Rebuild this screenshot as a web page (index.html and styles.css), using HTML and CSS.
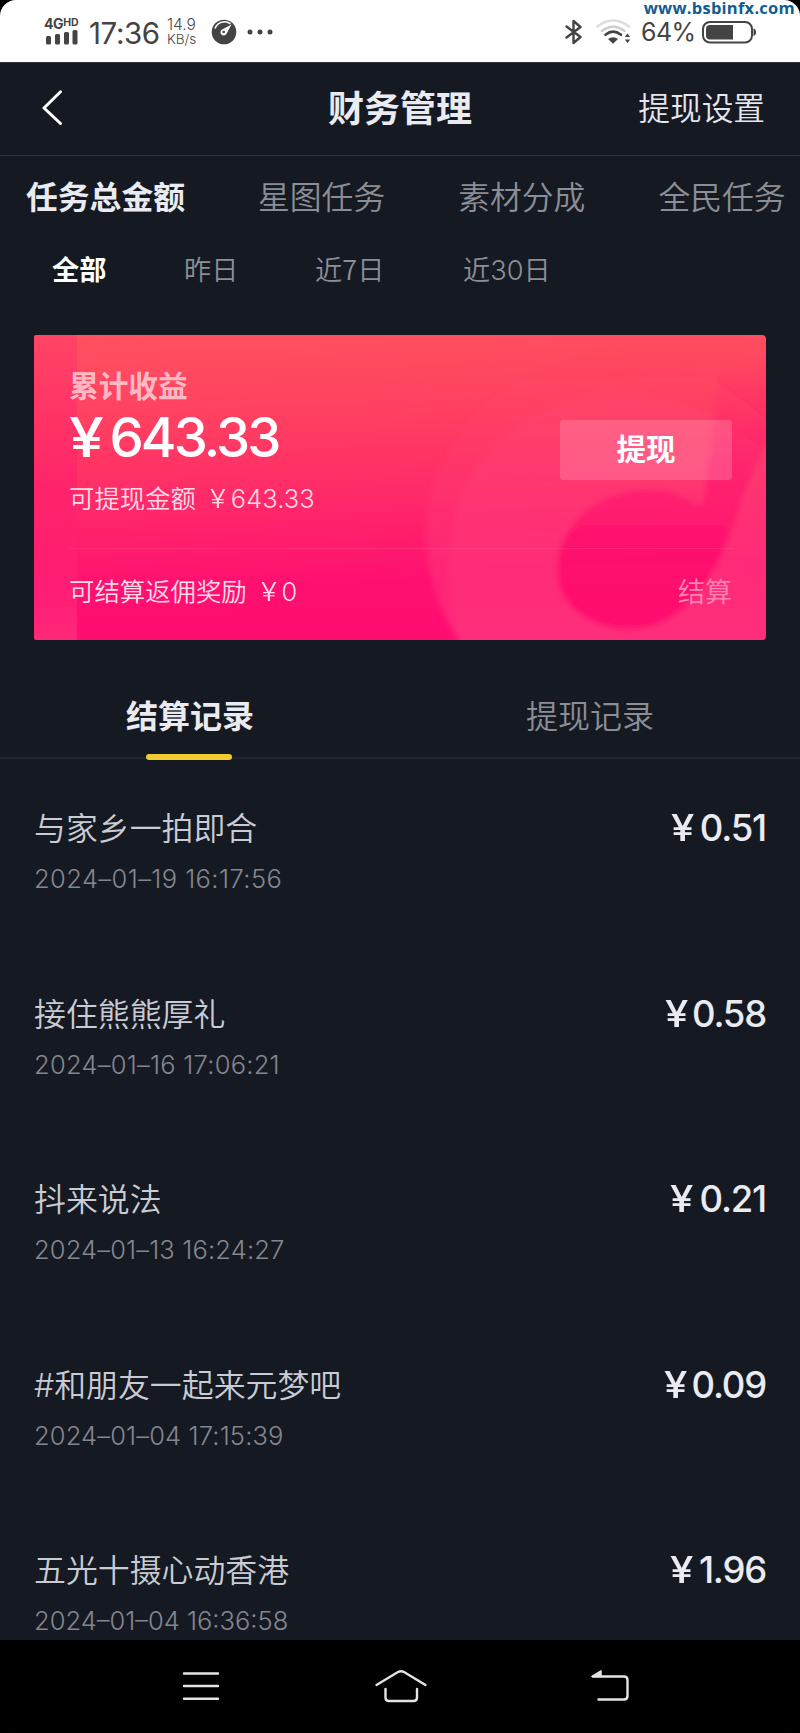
FILE: index.html
```html
<!DOCTYPE html>
<html lang="zh-CN">
<head>
<meta charset="utf-8">
<title>财务管理</title>
<link rel="stylesheet" href="styles.css">
</head>
<body>
<div class="phone">
  <div class="watermark">www.bsbinfx.com</div>
  <div class="status">
    <div class="signal">
      <div class="net">4G<span class="hd">HD</span></div>
      <svg width="32" height="15" viewBox="0 0 32 15" fill="#444"><rect x="0" y="6" width="5" height="8.5" rx="1.5"/><rect x="9" y="4" width="5" height="10.5" rx="1.5"/><rect x="18" y="2" width="5" height="12.5" rx="1.5"/><rect x="26.500" y="0" width="5" height="14.500" rx="1.500"/></svg>
    </div>
    <div class="clock">17:36</div>
    <div class="speed"><span>14.9</span><span class="unit">KB/s</span></div>
    <svg class="gauge" width="26" height="26" viewBox="0 0 26 26"><circle cx="13" cy="13" r="12.300" fill="#444"/><path d="M4 9.500A10 10 0 0 1 19.500 4.800" fill="none" stroke="#fff" stroke-width="1.600"/><path d="M20.500 5.500L15.500 14.800A3.200 3.200 0 1 1 11.200 10.500Z" fill="#fff"/><circle cx="12.700" cy="13" r="1.300" fill="#444"/></svg>
    <svg class="dots" width="26" height="6" viewBox="0 0 26 6" fill="#444"><circle cx="3" cy="3" r="2.500"/><circle cx="13" cy="3" r="2.500"/><circle cx="23" cy="3" r="2.500"/></svg>
    <svg class="bt" width="18" height="26" viewBox="0 0 18 26" fill="none" stroke="#444" stroke-width="2.400" stroke-linejoin="round" stroke-linecap="round"><path d="M1.500 7.500L15.500 18L8.500 24V2L15.500 8L1.500 18.500"/></svg>
    <svg class="wifi" width="35" height="26" viewBox="0 0 35 26" fill="none" stroke-linecap="round"><path d="M1.500 7.500Q17 -4.500 33 7.500" stroke="#ddd" stroke-width="2.600"/><path d="M6 12Q17 3.500 28.500 12" stroke="#ccc" stroke-width="2.600"/><path d="M9.500 15.800Q17 9.500 25 15.800" stroke="#444" stroke-width="2.600"/><path d="M12 20Q17 16.500 22 20L17 24.800Z" fill="#444"/><path d="M28.800 18L31.500 14.500L34.200 18ZM28.800 20.500L31.500 24L34.200 20.500Z" fill="#444"/></svg>
    <div class="pct">64%</div>
    <svg class="battery" width="54" height="23" viewBox="0 0 54 23"><rect x="1" y="1" width="49" height="20.500" rx="7" fill="none" stroke="#444" stroke-width="2"/><path d="M8 4H31V18.500H8Q4 18.500 4 14.500V8Q4 4 8 4Z" fill="#444"/><path d="M51.500 7.500Q54 8 54 11.200T51.500 15Z" fill="#444"/></svg>
  </div>
  <div class="header">
    <svg class="back" width="22" height="36" viewBox="0 0 22 36" fill="none" stroke="#fff" stroke-width="3" stroke-linecap="round" stroke-linejoin="round"><path d="M18.500 1.800L2 18L18.500 33.500"/></svg>
    <div class="title">财务管理</div>
    <div class="setting">提现设置</div>
  </div>
  <div class="tabs"><div class="active">任务总金额</div><div>星图任务</div><div>素材分成</div><div>全民任务</div></div>
  <div class="ranges"><div class="range-all">全部</div><div class="range-day">昨日</div><div class="range-week">近<span class="seven">7</span>日</div><div>近30日</div></div>
  <div class="card">
    <svg class="art" width="732" height="306" viewBox="0 0 732 306">
      <defs>
        <linearGradient id="ring" x1="0" y1="0" x2="0" y2="1"><stop offset="0" stop-color="#ff4a75" stop-opacity="0"/><stop offset="1" stop-color="#ff4c88" stop-opacity=".45"/></linearGradient>
        <linearGradient id="edge" x1="0" y1="0" x2="0" y2="1"><stop offset="0" stop-color="#ff1675" stop-opacity=".22"/><stop offset=".5" stop-color="#ff0f70" stop-opacity=".35"/><stop offset=".7" stop-color="#ff2478" stop-opacity=".3"/><stop offset="1" stop-color="#ff5085" stop-opacity=".4"/></linearGradient>
        <linearGradient id="swirl" gradientUnits="userSpaceOnUse" x1="0" y1="20" x2="0" y2="220"><stop offset="0" stop-color="#ff1070" stop-opacity="0"/><stop offset=".55" stop-color="#ff0e6d" stop-opacity=".42"/><stop offset="1" stop-color="#ff086b" stop-opacity=".75"/></linearGradient>
        <filter id="soft" x="-20%" y="-20%" width="140%" height="140%"><feGaussianBlur stdDeviation="3"/></filter>
      </defs>
      <rect width="43" height="306" fill="url(#edge)"/>
      <g filter="url(#soft)">
        <path d="M428 310C380 240 380 155 430 93C492 12 605 0 682 45L740 90V310Z" fill="url(#ring)"/>
        <path d="M425 310C400 215 419 130 495 84C555 44 625 54 674 80L740 120V310Z" fill="#ff5b8b" opacity=".13"/>
        <path d="M685 35Q678 110 667 172C648 154 613 149 587 158C540 170 514 212 524 252C537 291 596 309 637 284C672 262 695 215 708 165L740 90V20Z" fill="url(#swirl)"/>
      </g>
    </svg>
    <div class="card-main">
      <div class="label">累计收益</div>
      <div class="total"><span class="yen">¥</span>643.33</div>
      <div class="line">可提现金额<span class="value"><span class="yen">¥</span>643.33</span></div>
    </div>
    <div class="withdraw">提现</div>
    <div class="card-foot"><div class="line">可结算返佣奖励<span class="value"><span class="yen">¥</span>0</span></div><div class="settle">结算</div></div>
  </div>
  <div class="record-tabs"><div class="active">结算记录</div><div>提现记录</div></div>
  <div class="records">
    <div class="record"><div><div class="name">与家乡一拍即合</div><div class="date loose">2024–01–19 16:17:56</div></div><div class="amount narrow"><span class="yen">¥</span>0.51</div></div>
    <div class="record"><div><div class="name">接住熊熊厚礼</div><div class="date mid">2024–01–16 17:06:21</div></div><div class="amount"><span class="yen">¥</span>0.58</div></div>
    <div class="record"><div><div class="name">抖来说法</div><div class="date slight">2024–01–13 16:24:27</div></div><div class="amount narrow"><span class="yen">¥</span>0.21</div></div>
    <div class="record"><div><div class="name">#和朋友一起来元梦吧</div><div class="date slight">2024–01–04 17:15:39</div></div><div class="amount"><span class="yen">¥</span>0.09</div></div>
    <div class="record"><div><div class="name">五光十摄心动香港</div><div class="date">2024–01–04 16:36:58</div></div><div class="amount narrow"><span class="yen">¥</span>1.96</div></div>
  </div>
  <div class="nav">
    <svg width="38" height="32" viewBox="0 0 38 32" stroke="#e6e3e3" stroke-width="2.400" stroke-linecap="round"><path d="M2 3.500H36M2 16H36M2 28.800H36"/></svg>
    <svg class="home" width="54" height="34" viewBox="0 0 54 34" fill="none" stroke="#e6e3e3" stroke-width="2.400" stroke-linecap="round" stroke-linejoin="round"><path d="M2.500 16L24 3Q27 1.500 30 3L51.500 16M11.500 20V28.500Q11.500 32 15 32H39.500Q43 32 43 28.500V20"/></svg>
    <svg width="40" height="34" viewBox="0 0 40 34" fill="none" stroke="#e6e3e3" stroke-width="2.400" stroke-linecap="round" stroke-linejoin="round"><path d="M3 7.500H34Q37.500 7.500 37.500 11V27Q37.500 30.500 34 30.500H8.500"/><path d="M2 7.500L11 2V7.500Z" fill="#e6e3e3" stroke-width="1.500"/></svg>
  </div>
</div>
</body>
</html>
```
FILE: styles.css
```css
* { box-sizing: border-box; }
body { margin: 0; background: #000; }
.phone {
  position: relative;
  width: 800px;
  height: 1733px;
  overflow: hidden;
  background: #151922;
  border-radius: 16px;
  display: flex;
  flex-direction: column;
  font-family: Inter, "Noto Sans CJK SC", sans-serif;
  font-weight: 350;
  color: #8c8e96;
  white-space: nowrap;
}
.phone > * { flex-shrink: 0; }
.watermark {
  position: absolute;
  right: 5px;
  top: -4px;
  font: bold 16.5px/23px "Open Sans", sans-serif;
  letter-spacing: .25px;
  color: #125c8e;
}
.status { height: 62px; background: #fff; color: #444; display: flex; align-items: center; padding: 2px 44px 0 44px; }
.signal { width: 45px; display: flex; flex-direction: column; gap: 1px; margin-top: -2px; }
.signal svg { margin-left: 2px; }
.net { font: bold 14px/12px Inter, sans-serif; letter-spacing: -.4px; height: 12px; }
.hd { font-size: 10.5px; vertical-align: 3px; letter-spacing: 0; }
.clock { width: 78px; font-size: 29.5px; font-weight: 400; line-height: 34px; letter-spacing: -.4px; padding-top: 1px; }
.speed { width: 44px; display: flex; flex-direction: column; font-size: 15.5px; line-height: 15px; }
.unit { font-size: 13.5px; }
.dots { margin-left: 10px; }
.bt { margin-left: auto; }
.wifi { margin-left: 13px; }
.pct { width: 61px; margin-left: 10px; font-size: 25px; font-weight: 400; letter-spacing: -.6px; }
.header { height: 94px; border-top: 1px solid #333842; border-bottom: 1.5px solid #30343d; display: grid; grid-template-columns: 1fr auto 1fr; align-items: center; padding: 0 35px 0 42px; }
.back { margin-top: -2px; }
.title { font-size: 36px; font-weight: 700; color: #e9ebf1; line-height: 40px; padding-right: 7px; }
.setting { font-size: 31.7px; color: #e5e7ec; text-align: right; line-height: 40px; }
.tabs { display: flex; gap: 73px; padding: 22px 0 0 26px; height: 84px; font-size: 31.8px; line-height: 40px; }
.active { font-weight: 700; color: #e9ebf1; }
.ranges { display: flex; font-size: 27.2px; line-height: 36px; padding: 13px 0 0 52px; height: 95px; }
.range-all { width: 132px; color: #fff; font-weight: 700; }
.range-day { width: 131px; }
.range-week { width: 148px; }
.seven { font-family: "Noto Sans CJK SC", sans-serif; line-height: 1; }
.card { position: relative; width: 732px; height: 305px; margin: 0 34px; border-radius: 2px 4px 4px 2px; overflow: hidden; background: linear-gradient(178deg, #ff5260 0%, #ff4061 27%, #ff276a 55%, #ff1070 78%, #ff0c70 100%); color: #ffdce7; display: grid; grid-template: 213px 92px / 1fr 172px; padding: 0 34px 0 35px; }
.art { position: absolute; left: 0; top: 0; }
.card-main, .withdraw, .card-foot { position: relative; }
.card-main { padding-top: 32px; }
.label { font-size: 29.7px; line-height: 38px; font-weight: 700; color: #ffb9c4; }
.yen { display: inline-block; transform: scaleX(1.15); transform-origin: left; }
.total { font-size: 54.500px; line-height: 60px; font-weight: 500; color: #fff; letter-spacing: -2.9px; margin-top: 2px; }
.total .yen { margin-right: 13px; }
.line { font-size: 25.4px; line-height: 36px; }
.card-main .line { margin-top: 14px; }
.value { margin-left: 14px; letter-spacing: .1px; }
.value .yen { margin-right: 7px; }
.withdraw { align-self: start; margin-top: 85px; height: 60px; width: 172px; border-radius: 3px; background: rgba(255,255,255,.17); color: #fff; font-size: 29.5px; line-height: 58px; font-weight: 700; text-align: center; }
.card-foot { grid-column: 1 / 3; display: flex; justify-content: space-between; align-items: center; border-top: 1.5px solid rgba(255,120,165,.2); padding-bottom: 6px; }
.settle { font-size: 27px; color: #ff86b5; margin-top: -2px; }
.record-tabs { height: 119px; border-bottom: 2px solid #20242d; display: grid; grid-template-columns: 400px 400px; padding: 57px 0 0; font-size: 32px; line-height: 40px; text-align: center; }
.record-tabs > div { padding-right: 20px; }
.record-tabs .active::after { content: ""; display: block; width: 86px; height: 6px; border-radius: 3px; background: #f0cb32; margin: 17px auto 0; transform: translateX(-1px); }
.records { height: 881px; overflow: hidden; padding-top: 49px; }
.record { height: 185.6px; display: flex; justify-content: space-between; padding: 0 34px; }
.name { font-size: 31.9px; line-height: 42px; color: #c9ccd4; }
.date { font-size: 25.5px; line-height: 34px; color: #858790; margin-top: 12px; }
.loose { letter-spacing: .42px; }
.mid { letter-spacing: .25px; }
.slight { letter-spacing: .15px; }
.amount { font-size: 36.5px; line-height: 40px; font-weight: 500; color: #e9ebf1; letter-spacing: -1.2px; }
.amount .yen { margin-right: 8px; }
.narrow .yen { margin-right: 10px; }
.nav { height: 93px; background: #000; display: flex; justify-content: space-between; align-items: center; padding: 0 170px 1px 182px; }
.home { margin-right: 9px; }
```
